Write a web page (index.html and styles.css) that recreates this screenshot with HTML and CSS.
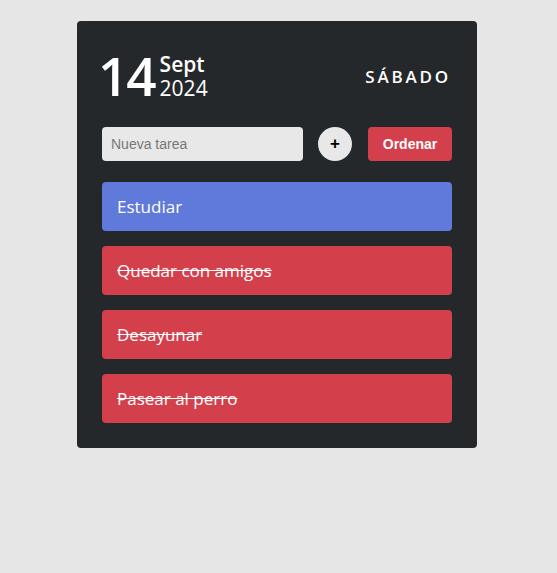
FILE: index.html
```html
<!DOCTYPE html>
<html lang="es">
<head>
<meta charset="utf-8">
<title>Tareas</title>
<link rel="stylesheet" href="styles.css">
</head>
<body>
<div class="card">
  <header class="header">
    <div class="date">
      <span class="day">14</span>
      <div class="month-year">
        <span class="month">Sept</span>
        <span class="year">2024</span>
      </div>
    </div>
    <div class="weekday">SÁBADO</div>
  </header>
  <form class="form">
    <input class="input" type="text" placeholder="Nueva tarea">
    <button class="add" type="button">+</button>
    <button class="sort" type="button">Ordenar</button>
  </form>
  <ul class="tasks">
    <li class="task task-pending">Estudiar</li>
    <li class="task task-done">Quedar con amigos</li>
    <li class="task task-done">Desayunar</li>
    <li class="task task-done">Pasear al perro</li>
  </ul>
</div>
</body>
</html>
```
FILE: styles.css
```css
* { box-sizing: border-box; }
body {
  margin: 0;
  background: #e6e6e6;
  font-family: "Open Sans", "Noto Sans", sans-serif;
}
.card {
  width: 400px;
  margin: 21px 0 0 77px;
  background: #25282a;
  border-radius: 4px;
  padding: 28px 25px 25px;
  color: #fff;
}
.header {
  display: flex;
  align-items: center;
  justify-content: space-between;
  padding-right: 3px;
}
.date {
  display: flex;
  align-items: center;
  gap: 5px;
}
.day {
  margin-left: -4px;
  font-size: 53px;
  line-height: 54px;
  font-weight: 600;
  letter-spacing: -2px;
}
.month-year {
  display: flex;
  flex-direction: column;
}
.month {
  font-size: 21px;
  line-height: 24px;
  font-weight: 600;
}
.year {
  font-size: 21px;
  line-height: 24px;
  font-weight: 400;
}
.weekday {
  font-size: 17px;
  font-weight: 600;
  letter-spacing: 2.8px;
  margin-right: -2px;
}
.form {
  display: flex;
  align-items: center;
  margin-top: 24px;
}
.input {
  width: 201px;
  height: 34px;
  border: none;
  border-radius: 4px;
  background: #e8e8e8;
  padding: 0 9px;
  font-family: "Liberation Sans", Arial, sans-serif;
  font-size: 14px;
  color: #333;
}
.input::placeholder { color: #777; }
.add {
  width: 34px;
  height: 34px;
  margin-left: 15px;
  border: none;
  border-radius: 50%;
  background: #e8e8e8;
  color: #000;
  font-family: "Liberation Sans", Arial, sans-serif;
  font-size: 17px;
  font-weight: 700;
  padding: 0;
}
.sort {
  margin-left: auto;
  width: 84px;
  height: 34px;
  border: none;
  border-radius: 4px;
  background: #d3404b;
  color: #fff;
  font-family: "Liberation Sans", Arial, sans-serif;
  font-size: 14px;
  font-weight: 700;
  padding: 0;
}
.tasks {
  list-style: none;
  margin: 21px 0 0;
  padding: 0;
  display: flex;
  flex-direction: column;
  gap: 15px;
}
.task {
  height: 49px;
  border-radius: 4px;
  padding: 0 15px;
  display: flex;
  align-items: center;
  font-size: 17px;
}
.task-pending { background: #5f7adb; }
.task-done {
  background: #d3404b;
  text-decoration: line-through;
}
```
